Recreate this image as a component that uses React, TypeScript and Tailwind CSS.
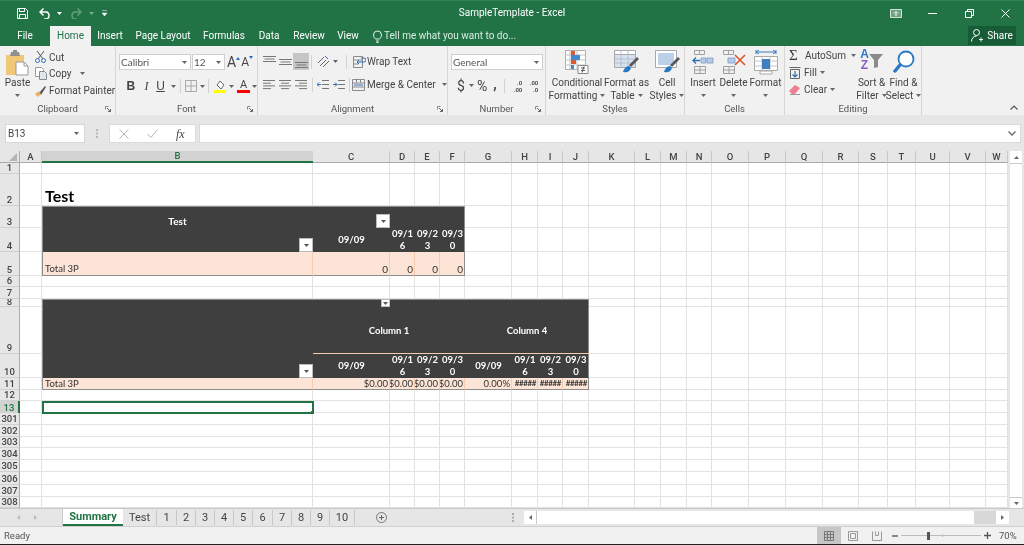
import React from "react";

const ui = "font-['Roboto','Liberation_Sans',sans-serif]";

function Caret({ c = "#666" }: { c?: string }) {
  return (
    <svg width="5" height="3" viewBox="0 0 5 3" className="shrink-0">
      <path d="M0 0h5L2.5 3z" fill={c} />
    </svg>
  );
}

function S({ w, h, children, className }: { w: number; h: number; children: React.ReactNode; className?: string }) {
  return (
    <svg width={w} height={h} viewBox={`0 0 ${w} ${h}`} className={"shrink-0 " + (className ?? "")} fill="none">
      {children}
    </svg>
  );
}

function Launcher() {
  return (
    <S w={6} h={6}>
      <path d="M.5 .5h3M.5 .5v3" stroke="#8a8a8a" />
      <path d="M2 2l3.5 3.5M3 5.5h2.5V3" stroke="#666" />
    </S>
  );
}

function Group({ className, label, launcher, children }: { className: string; label: string; launcher?: boolean; children: React.ReactNode }) {
  return (
    <div className={"flex flex-col shrink-0 h-full border-r border-[#d6d6d6] " + className}>
      <div className="h-[56px] flex">{children}</div>
      <div className="h-[13px] flex items-center justify-center relative text-[9.5px] leading-[13px] text-[#555]">
        {label}
        {launcher && (
          <span className="absolute right-[4px] top-[4px] flex">
            <Launcher />
          </span>
        )}
      </div>
    </div>
  );
}

function Big({ className, icon, l1, l2, caret }: { className: string; icon: React.ReactNode; l1: string; l2?: string; caret?: "l1" | "l2" | "below" }) {
  return (
    <div className={"flex flex-col items-center shrink-0 " + className}>
      <div className="h-[30px] pt-[4px] flex items-start justify-center">{icon}</div>
      <div className="h-[13px] leading-[13px] whitespace-nowrap">{l1}</div>
      <div className="h-[13px] leading-[13px] whitespace-nowrap flex items-center justify-center gap-[3px]">
        {l2}
        {caret && <Caret />}
      </div>
    </div>
  );
}

function Sep({ className }: { className?: string }) {
  return <div className={"w-px h-[14px] bg-[#d2d2d2] shrink-0 " + (className ?? "")} />;
}

function Lines({ a }: { a: "l" | "c" | "r" }) {
  const rows = [
    [0, 12],
    [2, 8],
    [0, 12],
    [2, 8],
  ];
  return (
    <S w={12} h={11}>
      {rows.map(([o, len], i) => {
        const x = a === "l" ? 0 : a === "r" ? 12 - (i % 2 ? 8 : 12) : o;
        return <path key={i} d={`M${x} ${1.5 + i * 2.7}h${len}`} stroke="#777" />;
      })}
    </S>
  );
}

function VAlign({ pos }: { pos: "t" | "m" | "b" }) {
  const y = pos === "t" ? 1 : pos === "m" ? 4 : 7;
  return (
    <S w={13} h={14}>
      <path d={`M0 ${y + 0.5}h13M1.500 ${y + 3}h10M0 ${y + 5.5}h13`} stroke="#777" />
    </S>
  );
}

function Clipboard() {
  return (
    <div className="w-[116px] h-full flex">
      <Big
        className="w-[35px]"
        icon={
          <S w={25} h={26}>
            <path d="M1 5h18v20H1z" fill="#f0c878" />
            <path d="M6 2h2V0h4v2h2l1 4H5z" fill="#8f8f8f" />
            <path d="M11 12h8l4 4v9H11z" fill="#fff" stroke="#9a9a9a" />
            <path d="M19 12v4h4" stroke="#9a9a9a" />
          </S>
        }
        l1="Paste"
        caret="below"
      />
      <div className="flex flex-col pt-[3px] text-[10px] whitespace-nowrap">
        <div className="h-[16px] flex items-center gap-[3px]">
          <S w={11} h={12}>
            <path d="M2 0l6 8M9 0L3 8" stroke="#555" />
            <circle cx="2.500" cy="9.500" r="2" stroke="#2b6fb8" />
            <circle cx="8.500" cy="9.500" r="2" stroke="#2b6fb8" />
          </S>
          <span>Cut</span>
        </div>
        <div className="h-[17px] flex items-center gap-[2px]">
          <S w={12} h={13}>
            <path d="M.5 .5h6l2 2v7h-8z" fill="#fff" stroke="#9a9a9a" />
            <path d="M4.500 4.500h5l2 2v6h-7z" fill="#dfe6ef" stroke="#8a8a8a" />
          </S>
          <span>Copy</span>
          <span className="ml-[6px] flex">
            <Caret />
          </span>
        </div>
        <div className="h-[17px] flex items-center gap-[3px]">
          <S w={11} h={12}>
            <path d="M4 8l6-7 1 1-5 8z" fill="#5a5a5a" />
            <path d="M0 9l4-3 2 3-3 3z" fill="#e5b060" />
          </S>
          <span>Format Painter</span>
        </div>
      </div>
    </div>
  );
}

function SelectBox({ className, text }: { className: string; text: string }) {
  return (
    <div className={"h-[16px] bg-white border border-[#d0d0d0] flex items-center justify-between pl-[1px] pr-[3px] shrink-0 " + className}>
      <span className="font-['Lato',sans-serif] text-[10px] text-[#555] leading-none">{text}</span>
      <Caret />
    </div>
  );
}

function GrowA({ big }: { big?: boolean }) {
  return (
    <div className="relative flex items-end">
      <span className={(big ? "text-[14px]" : "text-[12px]") + " leading-none text-[#444]"}>A</span>
      <svg width="4" height="3" viewBox="0 0 4 3" className="mb-[9px]">
        <path d={big ? "M0 3L2 0l2 3z" : "M0 0l2 3 2-3z"} fill="#2b6fb8" />
      </svg>
    </div>
  );
}

function FontGroup() {
  return (
    <div className="flex flex-col pl-[3px] pt-[8px] w-full">
      <div className="flex items-center h-[16px]">
        <SelectBox className="w-[72px]" text="Calibri" />
        <SelectBox className="w-[33px] ml-[1px]" text="12" />
        <div className="flex items-center ml-[2px] gap-[1px] w-[32px]">
          <GrowA big />
          <GrowA />
        </div>
      </div>
      <div className="flex items-center h-[16px] mt-[8px] text-[#444]">
        <span className="w-[22px] text-center font-['Liberation_Sans',sans-serif] font-bold text-[12px] leading-none pl-[3px]">B</span>
        <span className="w-[14px] text-center font-['Liberation_Serif',serif] italic text-[12px] leading-none">I</span>
        <span className="w-[16px] text-center font-['Liberation_Sans',sans-serif] underline text-[12px] leading-none">U</span>
        <span className="ml-[3px] flex">
          <Caret />
        </span>
        <Sep className="ml-[4px]" />
        <S w={12} h={12} className="ml-[4px]">
          <path d="M.5 .5h11v11H.5zM6 .5v11M.5 6h11" stroke="#a8a8a8" />
        </S>
        <span className="ml-[3px] flex">
          <Caret />
        </span>
        <Sep className="ml-[3px]" />
        <S w={12} h={14} className="ml-[5px]">
          <path d="M3 6l3-4 4 4-3 4z" fill="#fff" stroke="#666" />
          <path d="M0 11h12v3H0z" fill="#ffff00" />
        </S>
        <span className="ml-[3px] flex">
          <Caret />
        </span>
        <div className="ml-[3px] w-[13px] flex flex-col items-center">
          <span className="text-[11px] leading-[11px] text-[#444]">A</span>
          <div className="w-[13px] h-[3px] bg-[#ff0000]" />
        </div>
        <span className="ml-[2px] flex">
          <Caret />
        </span>
      </div>
    </div>
  );
}

function AlignGroup() {
  return (
    <div className="flex flex-col pl-[5px] pt-[7px] w-full">
      <div className="flex h-[17px] items-center">
        <VAlign pos="t" />
        <div className="w-[3px]" />
        <VAlign pos="m" />
        <div className="ml-[1px] w-[16px] h-[17px] bg-[#c6c6c6] flex items-center justify-center">
          <VAlign pos="b" />
        </div>
        <Sep className="ml-[2px]" />
        <S w={14} h={13} className="ml-[5px]">
          <path d="M1 8l6-6M3 11l6-6M6 12l6-6" stroke="#666" />
          <path d="M8 1l3 3" stroke="#2b6fb8" />
        </S>
        <span className="ml-[2px] flex">
          <Caret />
        </span>
        <Sep className="ml-[8px]" />
        <S w={13} h={12} className="ml-[6px]">
          <path d="M.5 .5h9v11h-9zM.5 4h9M.5 8h5" stroke="#8a8a8a" />
          <path d="M4 6h7a1.500 1.500 0 0 0 0-4H8M6 8l-2-2 2-2" stroke="#2b6fb8" />
        </S>
        <span className="ml-[1px] text-[10px] leading-none">Wrap Text</span>
      </div>
      <div className="flex h-[17px] items-center mt-[6px]">
        <Lines a="l" />
        <div className="w-[4px]" />
        <Lines a="c" />
        <div className="w-[4px]" />
        <Lines a="r" />
        <Sep className="ml-[5px]" />
        <S w={12} h={11} className="ml-[4px]">
          <path d="M5 1.500h7M5 5.500h7M5 9.500h7" stroke="#777" />
          <path d="M4 5.500H0M2 3.500l-2 2 2 2" stroke="#2b6fb8" />
        </S>
        <S w={12} h={11} className="ml-[4px]">
          <path d="M5 1.500h7M5 5.500h7M5 9.500h7" stroke="#777" />
          <path d="M0 5.500h4M2 3.500l2 2-2 2" stroke="#2b6fb8" />
        </S>
        <Sep className="ml-[4px]" />
        <S w={13} h={12} className="ml-[2px]">
          <path d="M.5 .5h12v11H.5zM.5 4h12M.5 8h12M4.500 .5V4M8.500 .5V4" stroke="#8a8a8a" />
          <path d="M2 6h9" stroke="#2b6fb8" />
        </S>
        <span className="ml-[2px] text-[10px] leading-none whitespace-nowrap">Merge &amp; Center</span>
        <span className="ml-[6px] flex">
          <Caret />
        </span>
      </div>
    </div>
  );
}

function NumberGroup() {
  return (
    <div className="flex flex-col pl-[3px] pt-[8px] w-full">
      <SelectBox className="w-[92px]" text="General" />
      <div className="flex items-center h-[17px] mt-[7px] pl-[5px] text-[#444]">
        <span className="text-[14px] leading-none w-[10px] text-center">$</span>
        <span className="ml-[3px] flex">
          <Caret />
        </span>
        <span className="ml-[3px] text-[14px] leading-none">%</span>
        <span className="ml-[6px] text-[14px] font-bold leading-none w-[5px] -translate-y-[2px]">,</span>
        <Sep className="ml-[6px]" />
        <div className="ml-[4px] w-[13px] text-[6px] leading-[7px] font-bold text-[#555] text-right">
          <div>.0</div>
          <div>.00</div>
        </div>
        <div className="ml-[3px] w-[13px] text-[6px] leading-[7px] font-bold text-[#555] text-right">
          <div>.00</div>
          <div>.0</div>
        </div>
      </div>
    </div>
  );
}

const iconCF = (
  <S w={24} h={24}>
    <path d="M.5 .5h20v19H.5z" fill="#fff" stroke="#b0b0b0" />
    <path d="M5 .5v19M12 .5v19M.5 5h20M.5 10h20M.5 15h20" stroke="#c4c4c4" />
    <path d="M6 1h4v4H6z" fill="#e0582f" />
    <path d="M6 5h9v5H6z" fill="#3f8ad0" />
    <path d="M6 10h5v4H6z" fill="#e0582f" />
    <path d="M6 15h3v4H6z" fill="#3f8ad0" />
    <path d="M13 15.500h10v8H13z" fill="#fff" stroke="#888" />
    <path d="M16 18h4M16 20.500h4M19 16.500l-2 6" stroke="#555" />
  </S>
);
const iconFT = (
  <S w={25} h={24}>
    <path d="M.5 .5h21v17H.5z" fill="#d7e1f0" stroke="#a8a8a8" />
    <path d="M.5 .5h21v4H.5z" fill="#fff" stroke="#a8a8a8" />
    <path d="M7 .5v17M14 .5v17M.5 9h21M.5 13h21" stroke="#b5bfce" />
    <path d="M15 15l8-8 2 2-8 8z" fill="#5a5a5a" />
    <path d="M9 22c1-4 4-6 6-6l2 2c-1 3-3 5-8 4z" fill="#2b79c2" />
  </S>
);
const iconCS = (
  <S w={25} h={24}>
    <path d="M.5 .5h21v17H.5z" fill="#fff" stroke="#a8a8a8" />
    <path d="M3 3h16v12H3z" fill="#bcd0ea" />
    <path d="M15 15l8-8 2 2-8 8z" fill="#5a5a5a" />
    <path d="M9 22c1-4 4-6 6-6l2 2c-1 3-3 5-8 4z" fill="#2b79c2" />
  </S>
);
const iconInsert = (
  <S w={23} h={24}>
    <path d="M2.500 .5h5v4h-5zM7.500 .5h5v4h-5z" stroke="#a0a0a0" />
    <path d="M9 8h5v5H9zM15 8h6v5h-6z" fill="#b7cbe6" stroke="#8aa6cc" />
    <path d="M8 10.500H1M4 7.500l-3 3 3 3" stroke="#2b6fb8" strokeWidth="1.300" />
    <path d="M2.500 16.500h11v7h-11zM8 16.500v7M2.500 20h11" stroke="#a0a0a0" />
  </S>
);
const iconDelete = (
  <S w={24} h={24}>
    <path d="M1.500 .5h5v4h-5zM6.500 .5h5v4h-5z" stroke="#a0a0a0" />
    <path d="M6 8h7v5H6z" fill="#b7cbe6" stroke="#8aa6cc" />
    <path d="M1.500 16.500h11v7h-11zM7 16.500v7M1.500 20h11" stroke="#a0a0a0" />
    <path d="M13 5l10 10M23 5L13 15" stroke="#d9532c" strokeWidth="1.600" />
  </S>
);
const iconFormat = (
  <S w={24} h={25}>
    <path d="M2 2h20M2 0v4M22 0v4M5 0l-3 2 3 2M19 0l3 2-3 2" stroke="#3f7fbf" />
    <path d="M.5 6.500h23v14H.5z" fill="#fff" stroke="#a8a8a8" />
    <path d="M8 6.500v14M16 6.500v14M.5 11h23M.5 16h23" stroke="#c4c4c4" />
    <path d="M8 9h8v10H8z" fill="#3f7fbf" />
    <path d="M6 21h12v3H6z" fill="#fff" stroke="#a8a8a8" />
  </S>
);
const iconSort = (
  <div className="flex items-start -mt-[1px]">
    <div className="flex flex-col items-center font-['Liberation_Sans',sans-serif] font-bold text-[12px] leading-[11px]">
      <span className="text-[#2b79c2]">A</span>
      <span className="text-[#8a5cc4]">Z</span>
    </div>
    <S w={14} h={14} className="mt-[5px]">
      <path d="M0 0h14L9 6v7l-4 1V6z" fill="#8a8a8a" />
    </S>
  </div>
);
const iconFind = (
  <S w={22} h={24}>
    <circle cx="13" cy="9" r="7.500" fill="#fff" stroke="#2b79c2" strokeWidth="1.800" />
    <path d="M7 15l-5 6" stroke="#2b79c2" strokeWidth="3.500" strokeLinecap="round" />
  </S>
);

function Ribbon() {
  return (
    <div className="h-[69px] bg-[#f1f1f1] flex text-[10px] text-[#444] shrink-0">
      <Group className="w-[116px]" label="Clipboard" launcher>
        <Clipboard />
      </Group>
      <Group className="w-[142px]" label="Font" launcher>
        <FontGroup />
      </Group>
      <Group className="w-[190px]" label="Alignment" launcher>
        <AlignGroup />
      </Group>
      <Group className="w-[98px]" label="Number" launcher>
        <NumberGroup />
      </Group>
      <Group className="w-[139px]" label="Styles">
        <div className="flex pl-[4px]">
          <Big className="w-[54px]" icon={iconCF} l1="Conditional" l2="Formatting" caret="l2" />
          <Big className="w-[45px]" icon={iconFT} l1="Format as" l2="Table" caret="l2" />
          <Big className="w-[36px]" icon={iconCS} l1="Cell" l2="Styles" caret="l2" />
        </div>
      </Group>
      <Group className="w-[100px]" label="Cells">
        <div className="flex pl-[3px]">
          <Big className="w-[30px]" icon={iconInsert} l1="Insert" caret="below" />
          <Big className="w-[31px]" icon={iconDelete} l1="Delete" caret="below" />
          <Big className="w-[33px]" icon={iconFormat} l1="Format" caret="below" />
        </div>
      </Group>
      <Group className="w-[137px]" label="Editing">
        <div className="flex">
          <div className="w-[71px] flex flex-col pl-[4px] pt-[1px]">
            <div className="h-[17px] flex items-center">
              <span className="w-[14px] text-[15px] leading-none text-[#333] font-['Liberation_Serif',serif]">Σ</span>
              <span className="ml-[3px]">AutoSum</span>
              <span className="ml-[5px] flex">
                <Caret />
              </span>
            </div>
            <div className="h-[17px] flex items-center">
              <S w={12} h={12}>
                <path d="M.5 .5h11M1.500 2.500h9v9h-9z" stroke="#666" />
                <path d="M6 4v6M3.500 7.500L6 10l2.500-2.500" stroke="#2b6fb8" strokeWidth="1.200" />
              </S>
              <span className="ml-[3px]">Fill</span>
              <span className="ml-[3px] flex">
                <Caret />
              </span>
            </div>
            <div className="h-[16px] flex items-center">
              <S w={12} h={11}>
                <path d="M0 7l6-6 5 3-5 6H3z" fill="#ef7f8f" />
                <path d="M1 10.500h10" stroke="#999" />
              </S>
              <span className="ml-[3px]">Clear</span>
              <span className="ml-[3px] flex">
                <Caret />
              </span>
            </div>
          </div>
          <Big className="w-[31px]" icon={iconSort} l1="Sort &" l2="Filter" caret="l2" />
          <Big className="w-[33px]" icon={iconFind} l1="Find &" l2="Select" caret="l2" />
        </div>
      </Group>
      <div className="flex-1 flex items-end justify-end pr-[6px] pb-[5px]">
        <S w={8} h={5}>
          <path d="M.5 4.500L4 1l3.500 3.500" stroke="#555" strokeWidth="1.200" />
        </S>
      </div>
    </div>
  );
}

function TitleBar() {
  return (
    <div className="h-[46px] bg-[#217346] text-white shrink-0 flex flex-col border-t border-[#2f8558]">
      <div className="h-[24px] grid grid-cols-[1fr_auto_1fr] items-center text-[10px]">
        <div className="flex items-center pl-[17px]">
          <S w={11} h={11}>
            <path d="M.5 .5h8l2 2v8H.5z" stroke="#fff" />
            <path d="M2.500 .5v3h5v-3M2.500 10.500v-4h6v4" stroke="#fff" />
          </S>
          <S w={13} h={12} className="ml-[11px]">
            <path d="M1 5h7a4 4 0 0 1 0 7H5M4.500 1.500L1 5l3.500 3.500" stroke="#fff" strokeWidth="1.500" />
          </S>
          <span className="ml-[5px] flex">
            <Caret c="#fff" />
          </span>
          <S w={12} h={12} className="ml-[8px] opacity-30">
            <path d="M11 5H4a4 4 0 0 0 0 7h3M7.500 1.500L11 5 7.500 8.500" stroke="#fff" strokeWidth="1.500" />
          </S>
          <span className="ml-[7px] flex opacity-40">
            <Caret c="#fff" />
          </span>
          <S w={5} h={6} className="ml-[8px]">
            <path d="M0 .5h5M0 3h5L2.500 6z" fill="#fff" stroke="#fff" strokeWidth=".5" />
          </S>
        </div>
        <span className="leading-none">SampleTemplate - Excel</span>
        <div className="flex items-center justify-end pr-[14px]">
          <S w={12} h={9}>
            <path d="M.5 .5h11v8H.5z" fill="#6fa389" stroke="#cfe2d8" />
            <path d="M6 7V3M4 4.500L6 2.500l2 2" stroke="#fff" />
          </S>
          <S w={9} h={1} className="ml-[26px]">
            <path d="M0 .5h9" stroke="#fff" />
          </S>
          <S w={9} h={9} className="ml-[28px]">
            <path d="M.5 2.500h6v6h-6zM2.500 2.500v-2h6v6h-2" stroke="#fff" />
          </S>
          <S w={9} h={9} className="ml-[27px]">
            <path d="M.5 .5l8 8M8.500 .5l-8 8" stroke="#fff" />
          </S>
        </div>
      </div>
      <div className="flex-1 flex items-end">
        {[
          ["File", "w-[50px]"],
          ["Home", "w-[41px] bg-[#f1f1f1] text-[#217346]"],
          ["Insert", "w-[38px]"],
          ["Page Layout", "w-[68px]"],
          ["Formulas", "w-[54px]"],
          ["Data", "w-[36px]"],
          ["Review", "w-[44px]"],
          ["View", "w-[34px]"],
        ].map(([t, c]) => (
          <div key={t} className={"h-[20px] flex items-center justify-center text-[10px] leading-none " + c}>
            {t}
          </div>
        ))}
        <div className="h-[20px] flex items-center ml-[8px] text-[10px] leading-none text-[#dcebe3]">
          <S w={9} h={13}>
            <path d="M2.500 9C1.500 8 .5 6.800 .5 5a4 4 0 0 1 8 0c0 1.800-1 3-2 4zM3 11h3M3.500 12.500h2" stroke="#e6f0ea" />
          </S>
          <span className="ml-[2px]">Tell me what you want to do...</span>
        </div>
        <div className="flex-1" />
        <div className="mr-[8px] mb-[1px] w-[48px] h-[19px] bg-[#185c37] flex items-center justify-center gap-[4px] text-[10px] leading-none">
          <S w={12} h={13}>
            <circle cx="5.500" cy="3.500" r="3" stroke="#fff" />
            <path d="M.5 12.500c0-3 2-5.500 5-5.500M8 10.500h4M10 8.500v4" stroke="#fff" />
          </S>
          Share
        </div>
      </div>
    </div>
  );
}

function FormulaBar() {
  return (
    <div className="h-[36px] bg-[#e6e6e6] shrink-0 flex items-start pt-[9px] pl-[5px] pr-[3px] text-[#444]">
      <div className="w-[80px] h-[19px] bg-white border border-[#d6d6d6] flex items-center justify-between pl-[2px] pr-[5px] text-[10px] leading-none">
        B13
        <Caret />
      </div>
      <div className="w-[24px] h-[19px] flex items-center justify-center">
        <S w={2} h={9}>
          <path d="M1 0v2M1 3.500v2M1 7v2" stroke="#aaa" strokeWidth="1.500" />
        </S>
      </div>
      <div className="w-[87px] h-[19px] bg-white border border-[#dadada] flex items-center">
        <S w={10} h={10} className="ml-[9px]">
          <path d="M.5 .5l9 9M9.500 .5l-9 9" stroke="#b5b5b5" />
        </S>
        <S w={11} h={9} className="ml-[18px]">
          <path d="M.5 5L4 8.500 10.500 .5" stroke="#b5b5b5" />
        </S>
        <span className="ml-[18px] font-['Liberation_Serif',serif] italic text-[12px] leading-none text-[#444]">fx</span>
      </div>
      <div className="ml-[3px] flex-1 h-[19px] bg-white border border-[#dadada] flex items-center justify-end pr-[4px]">
        <S w={8} h={5}>
          <path d="M.5 .5L4 4l3.500-3.500" stroke="#666" strokeWidth="1.300" />
        </S>
      </div>
    </div>
  );
}

const colL = "ABCDEFGHIJKLMNOPQRSTUVW".split("");
const rowN = ["1", "2", "3", "4", "5", "6", "7", "8", "9", "10", "11", "12", "13", "301", "302", "303", "304", "305", "306", "307", "308"];

function Filter({ small }: { small?: boolean }) {
  return (
    <div className={"bg-white border border-[#bcbcbc] flex items-center justify-center " + (small ? "w-[9px] h-[8px]" : "w-[14px] h-[14px]")}>
      <Caret c="#555" />
    </div>
  );
}

function At({ c, r, className, children }: { c: string; r: string; className?: string; children?: React.ReactNode }) {
  return (
    <div style={{ gridColumn: c, gridRow: r }} className={className}>
      {children}
    </div>
  );
}

const peach = "bg-[#fce4d6] border-r border-[#f8cbad] text-[#333]";
const head = "flex items-center justify-center text-white font-['Lato',sans-serif] font-bold text-[9.5px] leading-[12px] text-center";

function Sheet() {
  return (
    <div className="grid flex-1 grid-cols-[20px_22px_271px_77px_25px_25px_25px_47px_26px_25px_26px_46px_26px_26px_25px_37px_37px_37px_36px_29px_28px_34px_36px_22px] grid-rows-[12px_11px_32px_22px_24px_24px_11px_12px_8px_47px_24px_12px_11px_12px_12px_12px_11px_12px_12px_13px_12px_11px] bg-white overflow-hidden">
      <At c="1" r="1" className="bg-[#e6e6e6] border-r border-b border-[#ababab] flex items-end justify-end pr-[2px] pb-[1px]">
        <S w={8} h={8}>
          <path d="M8 0v8H0z" fill="#b4b4b4" />
        </S>
      </At>
      {colL.map((l, i) => (
        <At
          key={l}
          c={String(i + 2)}
          r="1"
          className={
            "flex items-center justify-center text-[9.5px] font-medium leading-none " +
            (l === "B"
              ? "bg-[#d2d2d2] border-b-2 border-[#217346] text-[#217346]"
              : "bg-[#e6e6e6] border-b border-r border-[#ababab] border-r-[#c8c8c8] text-[#444]")
          }
        >
          {l}
        </At>
      ))}
      {rowN.map((n, i) => (
        <At
          key={n}
          c="1"
          r={String(i + 2)}
          className={
            "flex items-end justify-center overflow-hidden text-[9.5px] font-medium " +
            (n === "8" ? "leading-[8px] " : "leading-[10px] ") +
            (n === "13"
              ? "bg-[#d2d2d2] border-r-2 border-[#217346] text-[#217346]"
              : "bg-[#e6e6e6] border-r border-b border-[#ababab] border-b-[#d0d0d0] text-[#444]")
          }
        >
          {n}
        </At>
      ))}
      {rowN.map((n, r) =>
        colL.map((l, c) => <At key={l + n} c={String(c + 2)} r={String(r + 2)} className="border-r border-b border-[#e2e2e2]" />)
      )}

      <At c="3 / 5" r="3" className="flex items-end pl-[3px] font-['Lato',sans-serif] font-bold text-[16px] leading-[20px] text-black">
        Test
      </At>

      {/* first table */}
      <At c="3 / 8" r="4 / 6" className="bg-[#3f3f3f] border-t border-l border-[#8c8c8c]" />
      <At c="3" r="4" className={head + " items-end pb-[1px] text-[10px]"}>
        Test
      </At>
      <At c="3" r="5" className="flex items-end justify-end">
        <Filter />
      </At>
      <At c="4" r="4" className="flex items-end justify-end">
        <Filter />
      </At>
      <At c="4" r="5" className={head}>
        09/09
      </At>
      {["09/1", "09/2", "09/3"].map((t, i) => (
        <At key={t} c={String(5 + i)} r="4 / 6" className={head + " items-end"}>
          <div>
            {t}
            <br />
            {["6", "3", "0"][i]}
          </div>
        </At>
      ))}
      <At c="3" r="6" className={peach + " border-l border-l-[#8c8c8c] border-b border-b-[#8c8c8c] flex items-end pl-[2px] font-['Lato',sans-serif] text-[9.5px] leading-[12px]"}>
        Total 3P
      </At>
      {[4, 5, 6, 7].map((c) => (
        <At key={c} c={String(c)} r="6" className={peach + " border-b border-b-[#8c8c8c] flex items-end justify-end pr-[1px] font-['Lato',sans-serif] text-[10px] leading-[12px]"}>
          0
        </At>
      ))}
      <At c="7" r="4 / 7" className="border-r border-[#8c8c8c]" />

      {/* second table */}
      <At c="3 / 12" r="9 / 12" className="bg-[#3f3f3f] border-t border-l border-r border-[#8c8c8c]" />
      <At c="4" r="9" className="flex items-start justify-end relative">
        <Filter small />
      </At>
      <At c="4 / 8" r="9 / 11" className={head + " pt-[10px] border-b border-[#f8cbad]"}>
        Column 1
      </At>
      <At c="8 / 12" r="9 / 11" className={head + " pt-[10px] border-b border-[#f8cbad]"}>
        Column 4
      </At>
      <At c="3" r="11" className="flex items-end justify-end">
        <Filter />
      </At>
      <At c="4" r="11" className={head}>
        09/09
      </At>
      <At c="8" r="11" className={head}>
        09/09
      </At>
      {[
        [5, "09/1", "6"],
        [6, "09/2", "3"],
        [7, "09/3", "0"],
        [9, "09/1", "6"],
        [10, "09/2", "3"],
        [11, "09/3", "0"],
      ].map(([c, a, b]) => (
        <At key={String(c)} c={String(c)} r="11" className={head + " items-end"}>
          <div>
            {a}
            <br />
            {b}
          </div>
        </At>
      ))}
      <At c="3" r="12" className={peach + " border-l border-l-[#8c8c8c] border-b border-b-[#8c8c8c] flex items-center pl-[2px] font-['Lato',sans-serif] text-[9.5px] leading-[11px]"}>
        Total 3P
      </At>
      {[
        [4, "$0.00"],
        [5, "$0.00"],
        [6, "$0.00"],
        [7, "$0.00"],
        [8, "0.00%"],
        [9, "#####"],
        [10, "#####"],
        [11, "#####"],
      ].map(([c, t]) => (
        <At key={String(c)} c={String(c)} r="12" className={peach + " border-b border-b-[#8c8c8c] flex items-center justify-end pr-[1px] overflow-hidden font-['Lato',sans-serif] leading-[11px] whitespace-nowrap " + (Number(c) > 8 ? "text-[8px] font-bold tracking-[-0.4px]" : "text-[9.5px]")}>
          {t}
        </At>
      ))}
      <At c="11" r="12" className="border-r border-[#8c8c8c]" />

      {/* selected cell */}
      <At c="3" r="14" className="border-2 border-[#217346] relative -mr-px -mb-px">
        <div className="absolute -right-[2px] -bottom-[2px] w-[3px] h-[3px] bg-[#217346]" />
      </At>
    </div>
  );
}

function VScroll() {
  return (
    <div className="w-[16px] bg-[#e6e6e6] flex flex-col items-center pl-[2px] pr-[2px] shrink-0">
      <div className="w-[12px] h-[12px] bg-white flex items-center justify-center">
        <svg width="5" height="3" viewBox="0 0 5 3">
          <path d="M0 3L2.500 0 5 3z" fill="#666" />
        </svg>
      </div>
      <div className="w-[12px] flex-1 bg-white border-t border-[#c8c8c8]" />
      <div className="w-[12px] h-[11px] bg-white flex items-center justify-center border-t border-[#c8c8c8]">
        <Caret />
      </div>
    </div>
  );
}

function Tabs() {
  const nums = [
    ["Test", "w-[34px]"],
    ["1", "w-[20px]"],
    ["2", "w-[19px]"],
    ["3", "w-[19px]"],
    ["4", "w-[19px]"],
    ["5", "w-[19px]"],
    ["6", "w-[20px]"],
    ["7", "w-[19px]"],
    ["8", "w-[19px]"],
    ["9", "w-[19px]"],
    ["10", "w-[25px]"],
  ];
  return (
    <div className="h-[19px] bg-[#e6e6e6] border-t border-[#c8c8c8] border-b border-b-[#d0d0d0] shrink-0 flex items-stretch text-[11px] text-[#444]">
      <div className="w-[63px] shrink-0 flex items-center pl-[17px] gap-[14px] border-r border-[#c8c8c8]">
        <svg width="3" height="5" viewBox="0 0 3 5">
          <path d="M3 0v5L0 2.500z" fill="#bbb" />
        </svg>
        <svg width="3" height="5" viewBox="0 0 3 5">
          <path d="M0 0v5l3-2.500z" fill="#bbb" />
        </svg>
      </div>
      <div className="w-[60px] shrink-0 bg-white border-b-2 border-[#217346] flex items-center justify-center font-bold text-[#217346] text-[11px] leading-none">Summary</div>
      {nums.map(([t, c]) => (
        <div key={t} className={"shrink-0 flex items-center justify-center leading-none border-r border-[#c8c8c8] my-[1px] " + c}>
          {t}
        </div>
      ))}
      <div className="ml-[21px] w-[13px] shrink-0 flex items-center">
        <S w={11} h={11}>
          <circle cx="5.500" cy="5.500" r="5" stroke="#777" />
          <path d="M3 5.500h5M5.500 3v5" stroke="#666" />
        </S>
      </div>
      <div className="ml-[119px] w-[10px] shrink-0 flex items-center justify-center">
        <S w={2} h={9}>
          <path d="M1 0v2M1 3.500v2M1 7v2" stroke="#999" strokeWidth="1.500" />
        </S>
      </div>
      <div className="ml-[6px] flex items-center shrink-0">
        <div className="w-[13px] h-[13px] bg-white flex items-center justify-center border-r border-[#c8c8c8]">
          <svg width="3" height="5" viewBox="0 0 3 5">
            <path d="M3 0v5L0 2.500z" fill="#666" />
          </svg>
        </div>
        <div className="w-[437px] h-[13px] bg-white" />
        <div className="w-[22px] h-[13px] bg-[#d8d8d8]" />
        <div className="w-[13px] h-[13px] bg-white flex items-center justify-center">
          <svg width="3" height="5" viewBox="0 0 3 5">
            <path d="M0 0v5l3-2.500z" fill="#666" />
          </svg>
        </div>
      </div>
    </div>
  );
}

function Status() {
  return (
    <div className="h-[17px] bg-[#f1f1f1] shrink-0 flex items-center pl-[4px] text-[9.5px] text-[#555] leading-none">
      <span>Ready</span>
      <div className="flex-1" />
      <div className="w-[24px] h-[17px] bg-[#c6c6c6] flex items-center justify-center">
        <S w={10} h={10}>
          <path d="M.5 .5h9v9h-9zM3.500 .5v9M6.500 .5v9M.5 3.500h9M.5 6.500h9" stroke="#777" />
        </S>
      </div>
      <div className="w-[24px] flex justify-center">
        <S w={10} h={10}>
          <path d="M.5 .5h9v9h-9zM2.500 2.500h5v5h-5z" stroke="#999" />
        </S>
      </div>
      <div className="w-[24px] flex justify-center">
        <S w={10} h={10}>
          <path d="M.5 .5v9h9v-9M3.500 .5v4h3v-4" stroke="#999" />
        </S>
      </div>
      <S w={6} h={2} className="ml-[3px]">
        <path d="M0 1h6" stroke="#666" strokeWidth="1.500" />
      </S>
      <div className="ml-[3px] w-[80px] h-[7px] flex items-center">
        <div className="w-[26px] h-px bg-[#bbb]" />
        <div className="w-[3px] h-[8px] bg-[#555]" />
        <div className="w-[12px] h-px bg-[#bbb]" />
        <div className="w-px h-[3px] bg-[#bbb]" />
        <div className="flex-1 h-px bg-[#bbb]" />
      </div>
      <S w={7} h={7} className="ml-[3px]">
        <path d="M0 3.500h7M3.500 0v7" stroke="#555" strokeWidth="1.300" />
      </S>
      <span className="ml-[8px] w-[25px]">70%</span>
    </div>
  );
}

export default function App() {
  return (
    <div className={"w-[1024px] h-[545px] overflow-hidden flex flex-col bg-white blur-[0.3px] " + ui}>
      <TitleBar />
      <Ribbon />
      <FormulaBar />
      <div className="h-[357px] flex shrink-0">
        <Sheet />
        <VScroll />
      </div>
      <Tabs />
      <Status />
      <div className="h-[1px] bg-[#222] shrink-0" />
    </div>
  );
}
